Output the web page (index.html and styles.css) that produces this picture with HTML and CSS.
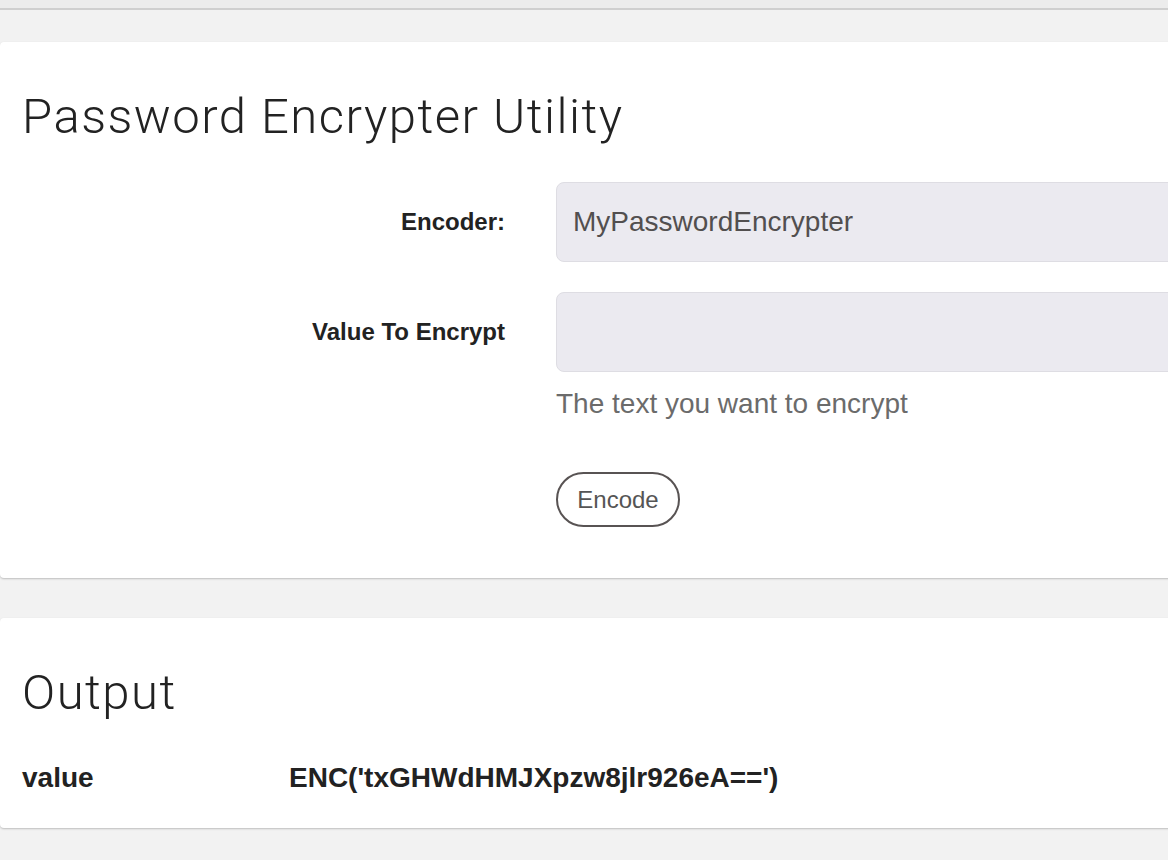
FILE: index.html
```html
<!DOCTYPE html>
<html>
<head>
<meta charset="utf-8">
<link rel="stylesheet" href="styles.css">
</head>
<body>
<div class="topbar"></div>
<main class="page">
  <section class="card">
    <h1 class="card-title">Password Encrypter Utility</h1>
    <form class="form">
      <label class="form-label" for="enc">Encoder:</label>
      <div class="form-field">
        <input class="form-input" id="enc" type="text" value="MyPasswordEncrypter" readonly>
      </div>
      <label class="form-label" for="val">Value To Encrypt</label>
      <div class="form-field">
        <input class="form-input" id="val" type="text">
        <p class="help">The text you want to encrypt</p>
        <button class="btn" type="button">Encode</button>
      </div>
    </form>
  </section>
  <section class="card card-output">
    <h1 class="card-title">Output</h1>
    <div class="output-row">
      <span class="out-key">value</span>
      <span class="out-val">ENC('txGHWdHMJXpzw8jlr926eA==')</span>
    </div>
  </section>
</main>
</body>
</html>
```

FILE: styles.css
```css
html, body {
  margin: 0;
  padding: 0;
}
body {
  background: #f2f2f2;
  font-family: "Liberation Sans", Arial, sans-serif;
  color: #222;
  overflow: hidden;
  width: 1168px;
  height: 860px;
}
.topbar {
  height: 8px;
  background: #ececec;
  border-bottom: 2px solid #cfcfcf;
}
.page {
  padding-top: 32px;
  display: flex;
  flex-direction: column;
  gap: 40px;
  width: 1240px;
}
.card {
  background: #fff;
  border-radius: 4px;
  box-shadow: 0 1px 2px rgba(0, 0, 0, 0.22);
  padding: 47px 22px 51px 22px;
}
.card-title {
  margin: 0;
  font-family: Roboto, "Liberation Sans", sans-serif;
  font-weight: 300;
  font-size: 49px;
  letter-spacing: 1.5px;
  line-height: 56px;
  color: #222;
}
.form {
  margin-top: 37px;
  display: grid;
  grid-template-columns: 483px 1fr;
  column-gap: 51px;
  row-gap: 30px;
  align-items: start;
}
.form-label {
  font-weight: bold;
  font-size: 24px;
  line-height: 80px;
  height: 80px;
  text-align: right;
  color: #222;
}
.form-field {
  display: flex;
  flex-direction: column;
  align-items: flex-start;
}
.form-input {
  box-sizing: border-box;
  width: 100%;
  height: 80px;
  background: #ebeaf0;
  border: 1px solid #dedde3;
  border-radius: 8px;
  padding: 0 16px;
  font-family: "Liberation Sans", Arial, sans-serif;
  font-size: 28px;
  color: #524f4f;
  outline: none;
}
.help {
  margin: 12px 0 0 0;
  font-size: 28px;
  line-height: 40px;
  color: #6b6b6b;
}
.btn {
  margin-top: 48px;
  height: 55px;
  width: 124px;
  box-sizing: border-box;
  border: 2px solid #585353;
  border-radius: 28px;
  background: #fff;
  font-family: "Liberation Sans", Arial, sans-serif;
  font-size: 24px;
  color: #555;
  padding: 0;
}
.card-output {
  padding-bottom: 30px;
}
.output-row {
  margin-top: 37px;
  display: grid;
  grid-template-columns: 267px 1fr;
  font-weight: bold;
  font-size: 28px;
  line-height: 40px;
  color: #222;
}
```
